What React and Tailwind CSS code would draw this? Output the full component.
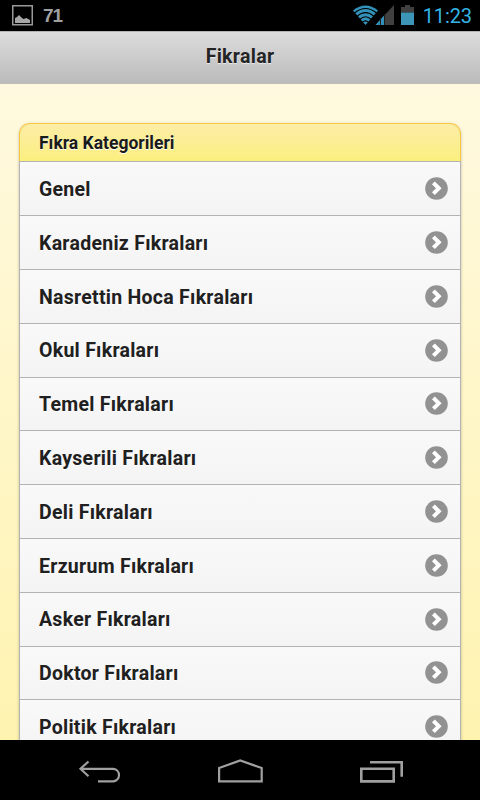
const categories = [
  "Genel",
  "Karadeniz Fıkraları",
  "Nasrettin Hoca Fıkraları",
  "Okul Fıkraları",
  "Temel Fıkraları",
  "Kayserili Fıkraları",
  "Deli Fıkraları",
  "Erzurum Fıkraları",
  "Asker Fıkraları",
  "Doktor Fıkraları",
  "Politik Fıkraları",
];

function StatusBar() {
  return (
    <div className="flex h-[31px] shrink-0 items-center bg-black pl-3 pr-2">
      <svg width="21" height="21" viewBox="0 0 21 21" fill="none">
        <rect x="0.75" y="0.75" width="19.5" height="19" stroke="#999" strokeWidth="1.5" />
        <path d="M3 18v-5l2-1 2-2 3 3 1.500 1 3-1 3.500 2v3z" fill="#a6a6a6" />
      </svg>
      <span className="ml-[10px] font-['Liberation_Sans',sans-serif] text-[19px] font-bold leading-none tracking-[-1px] text-[#a0a0a0]">71</span>
      <svg className="ml-auto" width="62" height="21" viewBox="0 0 62 21" fill="none">
        <path d="M0 5.500Q12.500-4.500 25 5.500L12.500 20z" fill="#3291b8" />
        <path d="M1.500 8Q12.500-1 23.500 8M4 11.300Q12.500 4 21 11.300M6.700 14.500Q12.500 9 18.300 14.500M9.300 17.300Q12.500 14.300 15.700 17.300" stroke="#000" strokeWidth="1.100" />
        <path d="M41 0v20H22.500z" fill="#404040" />
        <path d="M32 9.500V20h-9.500z" fill="#3291b8" />
        <path d="M27.500 13v7M31.500 9v11" stroke="#1b1b1b" strokeWidth="1" />
        <path d="M48 2h4V0h5v2h4v5.500H48z" fill="#404040" />
        <path d="M48 7.500h13V20H48z" fill="#3d96b8" />
      </svg>
      <span className="ml-2 pt-px text-[20px] leading-none tracking-[-0.1px] text-[#33b5e5]">11:23</span>
    </div>
  );
}

function ArrowBadge() {
  return (
    <svg className="shrink-0" width="23" height="23" viewBox="0 0 23 23" fill="none">
      <circle cx="11.500" cy="11.500" r="11.300" fill="#929292" />
      <path d="M8.400 5.900l5.400 5.400-5.400 5.400" stroke="#fff" strokeWidth="4" />
    </svg>
  );
}

function NavBar() {
  return (
    <div className="flex h-[60px] shrink-0 items-start justify-between bg-black pl-[77px] pr-[77px] pt-[19px]">
      <svg width="44" height="25" viewBox="0 0 44 25" fill="none" stroke="#a0a0a0" strokeWidth="2.200">
        <path d="M11.500 2.500L3.500 9.800l8 7.500M3.500 9.800H36.500a6.300 6.300 0 0 1 0 12.500H21" />
      </svg>
      <svg width="46" height="25" viewBox="0 0 46 25" fill="none" stroke="#a0a0a0" strokeWidth="2.200">
        <path d="M1.100 22.300V9L22.200 1.500 43.700 9v13.300z" />
      </svg>
      <svg width="43" height="25" viewBox="0 0 43 25" fill="none" stroke="#a0a0a0" strokeWidth="2.600">
        <path d="M1.300 9.800h32.400v12.600H1.300zM10 3.200h31.700V17.700" />
      </svg>
    </div>
  );
}

export default function App() {
  return (
    <div className="flex h-[800px] w-[480px] flex-col overflow-hidden bg-black font-[Roboto,sans-serif]">
      <StatusBar />
      <header className="flex h-[52.500px] shrink-0 items-center justify-center border-y border-t-[#b3b3b3] border-b-[#bfbfb8] bg-linear-to-b from-[#dddddd] to-[#bbbbbb] pb-0.5">
        <h1 className="text-[19.500px] font-bold leading-none tracking-[0.3px] text-[#242424] [text-shadow:0_1px_1px_#eeeeee]">Fikralar</h1>
      </header>
      <main className="min-h-0 flex-1 overflow-hidden bg-linear-to-b from-[#fff9df] to-[#fff3b0] px-[19px] pt-[39.500px]">
        <div className="rounded-t-[11px] shadow-[0_1px_3px_rgba(0,0,0,0.25)]">
          <h2 className="flex h-[38.400px] items-center rounded-t-[11px] border border-b-0 border-[#f7c942] bg-linear-to-b from-[#fceda7] to-[#fbef7e] px-[19px] pt-[2px] text-[17.500px] font-bold leading-none text-[#1a1a1a] [text-shadow:0_1px_0_#fff]">
            Fıkra Kategorileri
          </h2>
          <ul>
            {categories.map((name) => (
              <li
                key={name}
                className="flex h-[53.800px] items-center justify-between border-x border-t border-[#b3b3b3] bg-linear-to-b from-[#f9f9f9] to-[#f4f4f4] pl-[19px] pr-3 text-[19.500px] font-bold leading-none text-[#202020] [text-shadow:0_1px_0_#fff]"
              >
                <span className="pt-[2px] tracking-[0.270px]">{name}</span>
                <ArrowBadge />
              </li>
            ))}
          </ul>
        </div>
      </main>
      <NavBar />
    </div>
  );
}
